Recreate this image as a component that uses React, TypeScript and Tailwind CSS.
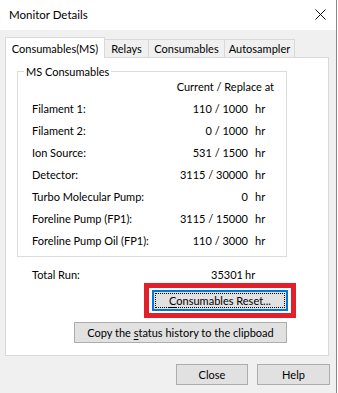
import React from "react";

const rows: { label: string; value: string }[] = [
  { label: "Filament 1:", value: "110 / 1000" },
  { label: "Filament 2:", value: "0 / 1000" },
  { label: "Ion Source:", value: "531 / 1500" },
  { label: "Detector:", value: "3115 / 30000" },
  { label: "Turbo Molecular Pump:", value: "0" },
  { label: "Foreline Pump (FP1):", value: "3115 / 15000" },
  { label: "Foreline Pump Oil (FP1):", value: "110 / 3000" },
];

function Tab({ label, active, width }: { label: string; active?: boolean; width: string }) {
  if (active) {
    return (
      <div className={`${width} h-[21px] -mb-px z-10 flex items-center justify-center bg-white border border-b-0 border-[#d9d9d9] whitespace-nowrap`}>
        {label}
      </div>
    );
  }
  return (
    <div className={`${width} h-[18px] flex items-center justify-center bg-[#f0f0f0] border border-l-0 border-b-0 border-[#d9d9d9] whitespace-nowrap`}>
      {label}
    </div>
  );
}

export default function App() {
  return (
    <div
      className="w-[338px] h-[393px] flex overflow-hidden text-[11px] leading-none text-black"
      style={{ fontFamily: "Lato, 'Noto Sans', sans-serif" }}
    >
      <div className="w-[336px] flex flex-col">
        {/* title bar */}
        <div className="h-[30px] bg-white flex items-center justify-between pl-[9px] pr-[10px]">
          <span className="text-[11.5px]">Monitor Details</span>
          <svg width="11" height="11" viewBox="0 0 11 11" className="mt-[-1px]">
            <path d="M0.5 0.5 L10.5 10.5 M10.5 0.5 L0.5 10.5" stroke="#111" strokeWidth="1" fill="none" />
          </svg>
        </div>

        <div className="flex-1 bg-[#f0f0f0] pl-[5px] pt-[7px] flex flex-col">
          {/* tabs */}
          <div className="flex items-end h-[20px]">
            <Tab label="Consumables(MS)" active width="w-[100px]" />
            <Tab label="Relays" width="w-[44px]" />
            <Tab label="Consumables" width="w-[76px]" />
            <Tab label="Autosampler" width="w-[70px]" />
          </div>

          {/* panel */}
          <div className="w-[324px] h-[299px] bg-white border border-[#d9d9d9] flex flex-col">
            <div className="relative ml-[11px] mt-[13px] w-[270px] h-[186px] border border-[#dcdcdc] pt-[3px]">
              <span className="absolute left-[6px] top-[-8px] bg-white px-[2px] leading-[15px]">MS Consumables</span>
              <div className="h-[22px] flex items-center justify-end pr-[12px]">Current / Replace at</div>
              {rows.map((r) => (
                <div key={r.label} className="h-[22px] flex items-center pl-[14px]">
                  <span className="flex-1">{r.label}</span>
                  <span className="text-right">{r.value}</span>
                  <span className="w-[38px] pl-[7px]">hr</span>
                </div>
              ))}
            </div>

            <div className="mt-[7px] h-[20px] flex items-center pl-[26px] w-[270px]">
              <span className="flex-1">Total Run:</span>
              <span>35301</span>
              <span className="w-[33px] pl-[2px]">hr</span>
            </div>

            <div className="self-end mr-[32px] -mt-px border-[5px] border-[#e3202a] px-[3px] py-[2px]">
              <button className="w-[136px] h-[21px] bg-[#e1e1e1] border-2 border-[#0078d7] p-px flex">
                <span className="flex-1 border border-dotted border-black flex items-center justify-center whitespace-nowrap">
                  <span>
                    <span className="underline underline-offset-2">C</span>onsumables Reset...
                  </span>
                </span>
              </button>
            </div>

            <button className="self-end mr-[41px] mt-[4px] w-[213px] h-[21px] bg-[#e1e1e1] border border-[#adadad] flex items-center justify-center whitespace-nowrap">
              <span>
                Copy the <span className="underline underline-offset-2">s</span>tatus history to the clipboad
              </span>
            </button>
          </div>

          {/* dialog buttons */}
          <div className="mt-[8px] flex justify-end gap-[9px] pr-[6px]">
            <button className="w-[72px] h-[21px] bg-[#e1e1e1] border border-[#adadad]">Close</button>
            <button className="w-[73px] h-[21px] bg-[#e1e1e1] border border-[#adadad]">Help</button>
          </div>
        </div>
      </div>
      <div className="w-px bg-[#8a8a8a]" />
      <div className="w-px bg-white" />
    </div>
  );
}
